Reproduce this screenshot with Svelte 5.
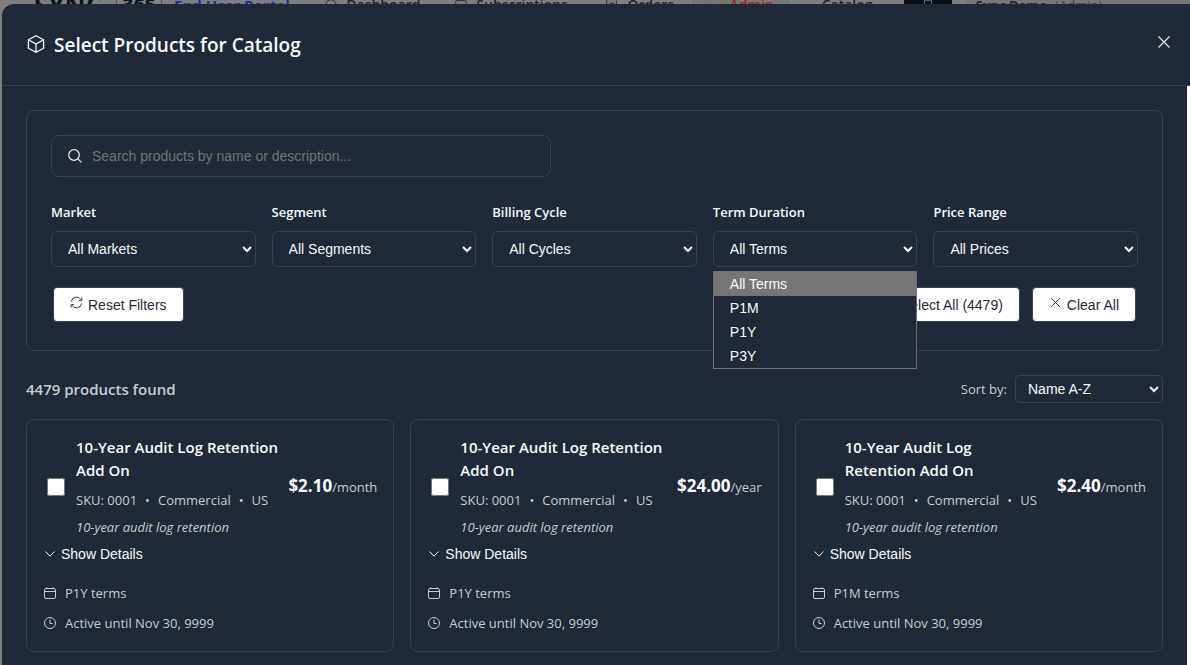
<script lang="ts">
  /** ProductPicker — catalog product selection modal over the admin portal */
  type Product = { id: number; name: string; sku: string; segment: string; market: string; desc: string; price: string; per: string; term: string; until: string };

  const filters = [
    { id: 'market', label: 'Market', options: ['All Markets'] },
    { id: 'segment', label: 'Segment', options: ['All Segments'] },
    { id: 'cycle', label: 'Billing Cycle', options: ['All Cycles'] },
    { id: 'term', label: 'Term Duration', options: ['All Terms', 'P1M', 'P1Y', 'P3Y'] },
    { id: 'price', label: 'Price Range', options: ['All Prices'] },
  ];

  const base = {
    name: '10-Year Audit Log Retention Add On',
    sku: '0001',
    segment: 'Commercial',
    market: 'US',
    desc: '10-year audit log retention',
    until: 'Nov 30, 9999',
  };
  const products: Product[] = [
    { ...base, id: 1, price: '$2.10', per: 'month', term: 'P1Y' },
    { ...base, id: 2, price: '$24.00', per: 'year', term: 'P1Y' },
    { ...base, id: 3, name: '10-Year Audit Log\nRetention Add On', price: '$2.40', per: 'month', term: 'P1M' },
  ];

  let total = 4479;
  let query = $state('');
  let openMenu = $state('term');
  let term = $state('All Terms');

  function pick(option: string) {
    term = option;
    openMenu = '';
  }
</script>

<div class="page">
  <header class="nav">
    <span class="brand">SYNC <b>365</b></span>
    <a class="portal" href="#portal">End User Portal</a>
    <a href="#dashboard"><svg viewBox="0 0 16 16"><circle cx="8" cy="8" r="6" /><path d="M8 8v6M5 9v4M11 9v4" /></svg>Dashboard</a>
    <a href="#subscriptions"><svg viewBox="0 0 16 16"><rect x="2" y="3" width="12" height="11" rx="1" /></svg>Subscriptions</a>
    <a href="#orders"><svg viewBox="0 0 16 16"><path d="M2 2v12M6 6h4v7H6zM13 3v9" /></svg>Orders</a>
    <a class="admin" href="#admin"><svg viewBox="0 0 16 16"><path d="M2 6v5l6 3 6-3V6M5 10l3 2 3-2" /></svg>Admin</a>
    <a href="#catalog">Catalog</a>
    <button class="cart" aria-label="cart"><svg viewBox="0 0 16 16"><path d="M4 3h8v10H4zM4 8h8" /></svg></button>
    <span class="user"><b>Sync Demo</b> (Admin)</span>
  </header>

  <div class="modal" role="dialog" aria-labelledby="picker-title">
    <div class="head">
      <svg class="cube" viewBox="0 0 20 20"><path d="M10 1.700l7.600 4.100v8.400L10 18.300l-7.600-4.100V5.800zM2.400 5.800L10 10l7.600-4.200M10 10v8.300" /></svg>
      <h2 id="picker-title">Select Products for Catalog</h2>
      <button class="close" aria-label="Close"><svg viewBox="0 0 12 12"><path d="M.5.500l11 11M11.500.500l-11 11" /></svg></button>
    </div>

    <div class="scroll">
      <div class="content">
        <section class="filters">
          <label class="search">
            <svg viewBox="0 0 14 14"><circle cx="6" cy="6" r="5.300" /><path d="M9.900 9.900l3.500 3.500" /></svg>
            <input type="text" aria-label="Search products" placeholder="Search products by name or description..." bind:value={query} />
          </label>

          <div class="fields">
            {#each filters as f (f.id)}
              <div class="field">
                <label for={f.id}>{f.label}</label>
                {#if f.id === 'term'}
                  <select id={f.id} bind:value={term}>
                    {#each f.options as o}<option>{o}</option>{/each}
                  </select>
                {:else}
                  <select id={f.id}>
                    {#each f.options as o}<option>{o}</option>{/each}
                  </select>
                {/if}
                {#if openMenu === f.id}
                  <div class="menu" role="listbox" aria-label={f.label}>
                    {#each f.options as o}
                      <button role="option" aria-selected={o === term} class:active={o === term} onclick={() => pick(o)}>{o}</button>
                    {/each}
                  </div>
                {/if}
              </div>
            {/each}
          </div>

          <div class="actions">
            <button class="btn" onclick={() => (query = '')}>
              <svg viewBox="0 0 14 14"><path d="M1.500 6A5.500 5.500 0 0 1 11.800 4M12.800 1.500v3.200H9.600M12.500 8A5.500 5.500 0 0 1 2.200 10M1.200 12.500V9.300h3.200" /></svg>
              Reset Filters
            </button>
            <button class="btn push">
              <svg viewBox="0 0 14 14"><path d="M2 7.500l3.500 3.500L12 3.500" /></svg>
              Select All ({total})
            </button>
            <button class="btn">
              <svg viewBox="0 0 14 14"><path d="M2.500 2.500l9 9M11.500 2.500l-9 9" /></svg>
              Clear All
            </button>
          </div>
        </section>

        <div class="bar">
          <strong>{total} products found</strong>
          <label for="sort">Sort by:</label>
          <select id="sort" class="sort"><option>Name A-Z</option></select>
        </div>

        <div class="cards">
          {#each products as p (p.id)}
            <article class="card">
              <div class="top">
                <input type="checkbox" aria-label={p.name} />
                <div class="info">
                  <h3>{p.name}</h3>
                  <div class="meta"><span>SKU: {p.sku}</span><span>•</span><span>{p.segment}</span><span>•</span><span>{p.market}</span></div>
                  <p>{p.desc}</p>
                </div>
                <div class="price"><b>{p.price}</b>/{p.per}</div>
              </div>
              <button class="details"><svg viewBox="0 0 12 12"><path d="M1.500 3.500L6 8.200l4.500-4.700" /></svg>Show Details</button>
              <div class="line">
                <svg viewBox="0 0 12 12"><rect x=".5" y="1.500" width="11" height="10" rx="1.500" /><path d="M.5 4.500h11M3 .300v1.500M9 .300v1.500" /></svg>
                {p.term} terms
              </div>
              <div class="line">
                <svg viewBox="0 0 12 12"><circle cx="6" cy="6" r="5.500" /><path d="M6 2.500V6.500h2.500" /></svg>
                Active until {p.until}
              </div>
            </article>
          {/each}
        </div>
      </div>
      <div class="track"></div>
    </div>
  </div>
</div>

<style>
  :global(body) { background: #7f7f7f; overflow: hidden; }
  .page {
    --bg: #1f2937; --line: #374151; --fg: #f9fafb; --muted: #c9ccd1;
    --ui: "Segoe UI", "Open Sans", "Noto Sans", sans-serif;
    --ctl: "Liberation Sans", Arial, sans-serif;
    height: 100vh; display: flex; flex-direction: column;
    font: 13px/20px var(--ui); color: var(--muted);
  }
  .page * { box-sizing: border-box; }
  svg { flex: none; fill: none; stroke: currentColor; stroke-width: 1; }
  h2, h3, p { margin: 0; }

  /* portal bar, scrolled almost out of view */
  .nav {
    flex: none; height: 4px; overflow: hidden;
    display: grid; align-items: end;
    grid-template-columns: 140fr 150fr 130fr 151fr 87fr 129fr 82fr 62fr 224fr;
    padding-left: 34px; font: 600 14px/10px var(--ui); color: #1c2536;
  }
  .nav > * { display: flex; align-items: center; gap: 8px; height: 10px; color: inherit; text-decoration: none; white-space: nowrap; }
  .nav svg { width: 14px; height: 14px; }
  .nav .brand { gap: 14px; font-size: 26px; font-weight: 700; color: #0d1420; }
  .brand b { font-size: 19px; border: solid #4b5563; border-width: 0 1px; padding: 0 5px; }
  .nav .portal { color: #1e2f9c; font-size: 15px; font-weight: 700; }
  .nav .admin { color: #a3262e; justify-self: start; padding: 0 14px; border: solid #6b6b6b; border-width: 0 1px; background: #787878; }
  .nav .cart { width: 48px; padding: 0; border: 0; background: #0a0f18; color: #6b7280; justify-content: center; }
  .nav .user { padding-left: 10px; background: #787878; font-size: 13px; font-weight: 400; color: #374151; }
  .user b { color: #1c2536; }

  .modal {
    flex: 1; min-height: 0; margin-left: 2px;
    display: flex; flex-direction: column;
    background: var(--bg); border-radius: 12px 0 0 0; overflow: hidden;
  }
  .head {
    flex: none; height: 82px; padding: 0 20px 0 24px;
    display: flex; align-items: center; gap: 8px;
    border-bottom: 1px solid var(--line); color: var(--fg);
  }
  .head h2 { font-size: 19px; line-height: 28px; font-weight: 600; }
  .cube { width: 20px; height: 20px; margin-bottom: 2px; stroke-width: 1.3; }
  .close { margin-left: auto; padding: 0 0 6px; border: 0; background: none; color: #e5e7eb; display: flex; }
  .close svg { width: 12px; height: 12px; stroke-width: 1.2; }

  .scroll { flex: 1; min-height: 0; display: flex; }
  .content { flex: 1; min-width: 0; padding: 24px; }
  .track { width: 3px; background: #fff; }

  .filters { padding: 24px; border: 1px solid var(--line); border-radius: 8px; }
  .search {
    display: flex; align-items: center; gap: 10px;
    max-width: 500px; height: 42px; padding: 0 16px;
    border: 1px solid var(--line); border-radius: 8px; color: #e5e7eb;
  }
  .search svg { width: 14px; height: 14px; stroke-width: 1.3; }
  .search input { flex: 1; padding: 0; border: 0; outline: 0; background: none; color: var(--fg); font: 14px var(--ctl); }
  .search input::placeholder { color: #757575; }

  .fields { display: grid; grid-template-columns: repeat(5, minmax(0, 1fr)); gap: 16px; margin-top: 24px; }
  .field { position: relative; display: flex; flex-direction: column; gap: 8px; }
  .field label { line-height: 22px; font-weight: 600; color: var(--fg); }
  select {
    height: 36px; padding: 0 4px 0 12px;
    border: 1px solid var(--line); border-radius: 6px;
    background: var(--bg); color: var(--fg); font: 14px var(--ctl);
  }
  .menu {
    position: absolute; z-index: 5; top: calc(100% + 4px); left: 0; right: 0;
    border: 1px solid #6f6f6f; background: var(--bg);
  }
  .menu button {
    display: block; width: 100%; height: 24px; padding: 0 16px;
    border: 0; background: none; color: var(--fg); font: 14px var(--ctl); text-align: left;
  }
  .menu .active { background: #767676; }

  .actions { display: flex; gap: 12px; margin-top: 16px; padding: 4px 2px; }
  .btn {
    display: flex; align-items: center; gap: 5px; height: 35px; padding: 0 16px;
    border: 1px solid var(--line); border-radius: 4px;
    background: #fff; color: #1f2937; font: 14px var(--ctl);
  }
  .btn svg { width: 13px; height: 13px; margin-bottom: 4px; }
  .push { margin-left: auto; }

  .bar { display: flex; align-items: center; gap: 8px; margin: 24px 0 16px; }
  .bar strong { flex: 1; font-size: 15px; font-weight: 600; }
  .sort { width: 148px; height: 28px; padding-left: 8px; border-radius: 4px; }

  .cards { display: grid; grid-template-columns: repeat(3, minmax(0, 1fr)); gap: 16px; }
  .card { padding: 16px 16px 17px 17px; border: 1px solid var(--line); border-radius: 8px; }
  .top { display: flex; align-items: center; }
  .top input { flex: none; width: 18px; height: 18px; margin: 0 11px 0 3px; }
  .info { flex: 1; min-width: 0; }
  .info h3 { font-size: 15px; line-height: 23px; font-weight: 600; color: var(--fg); white-space: pre-line; }
  .meta { display: flex; gap: 8px; margin: 8px 0 7px; white-space: nowrap; }
  .info p { font-style: italic; }
  .price { margin-left: 8px; white-space: nowrap; }
  .price b { font-size: 17px; font-weight: 700; color: var(--fg); }
  .details {
    display: flex; align-items: center; gap: 5px; height: 34px; padding: 0;
    border: 0; background: none; color: var(--fg); font: 14px var(--ctl);
  }
  .details svg { width: 12px; height: 12px; }
  .line { display: flex; align-items: center; gap: 9px; height: 22px; margin-top: 8px; }
  .details + .line { margin-top: 11px; }
  .line svg { width: 12px; height: 12px; }
</style>
